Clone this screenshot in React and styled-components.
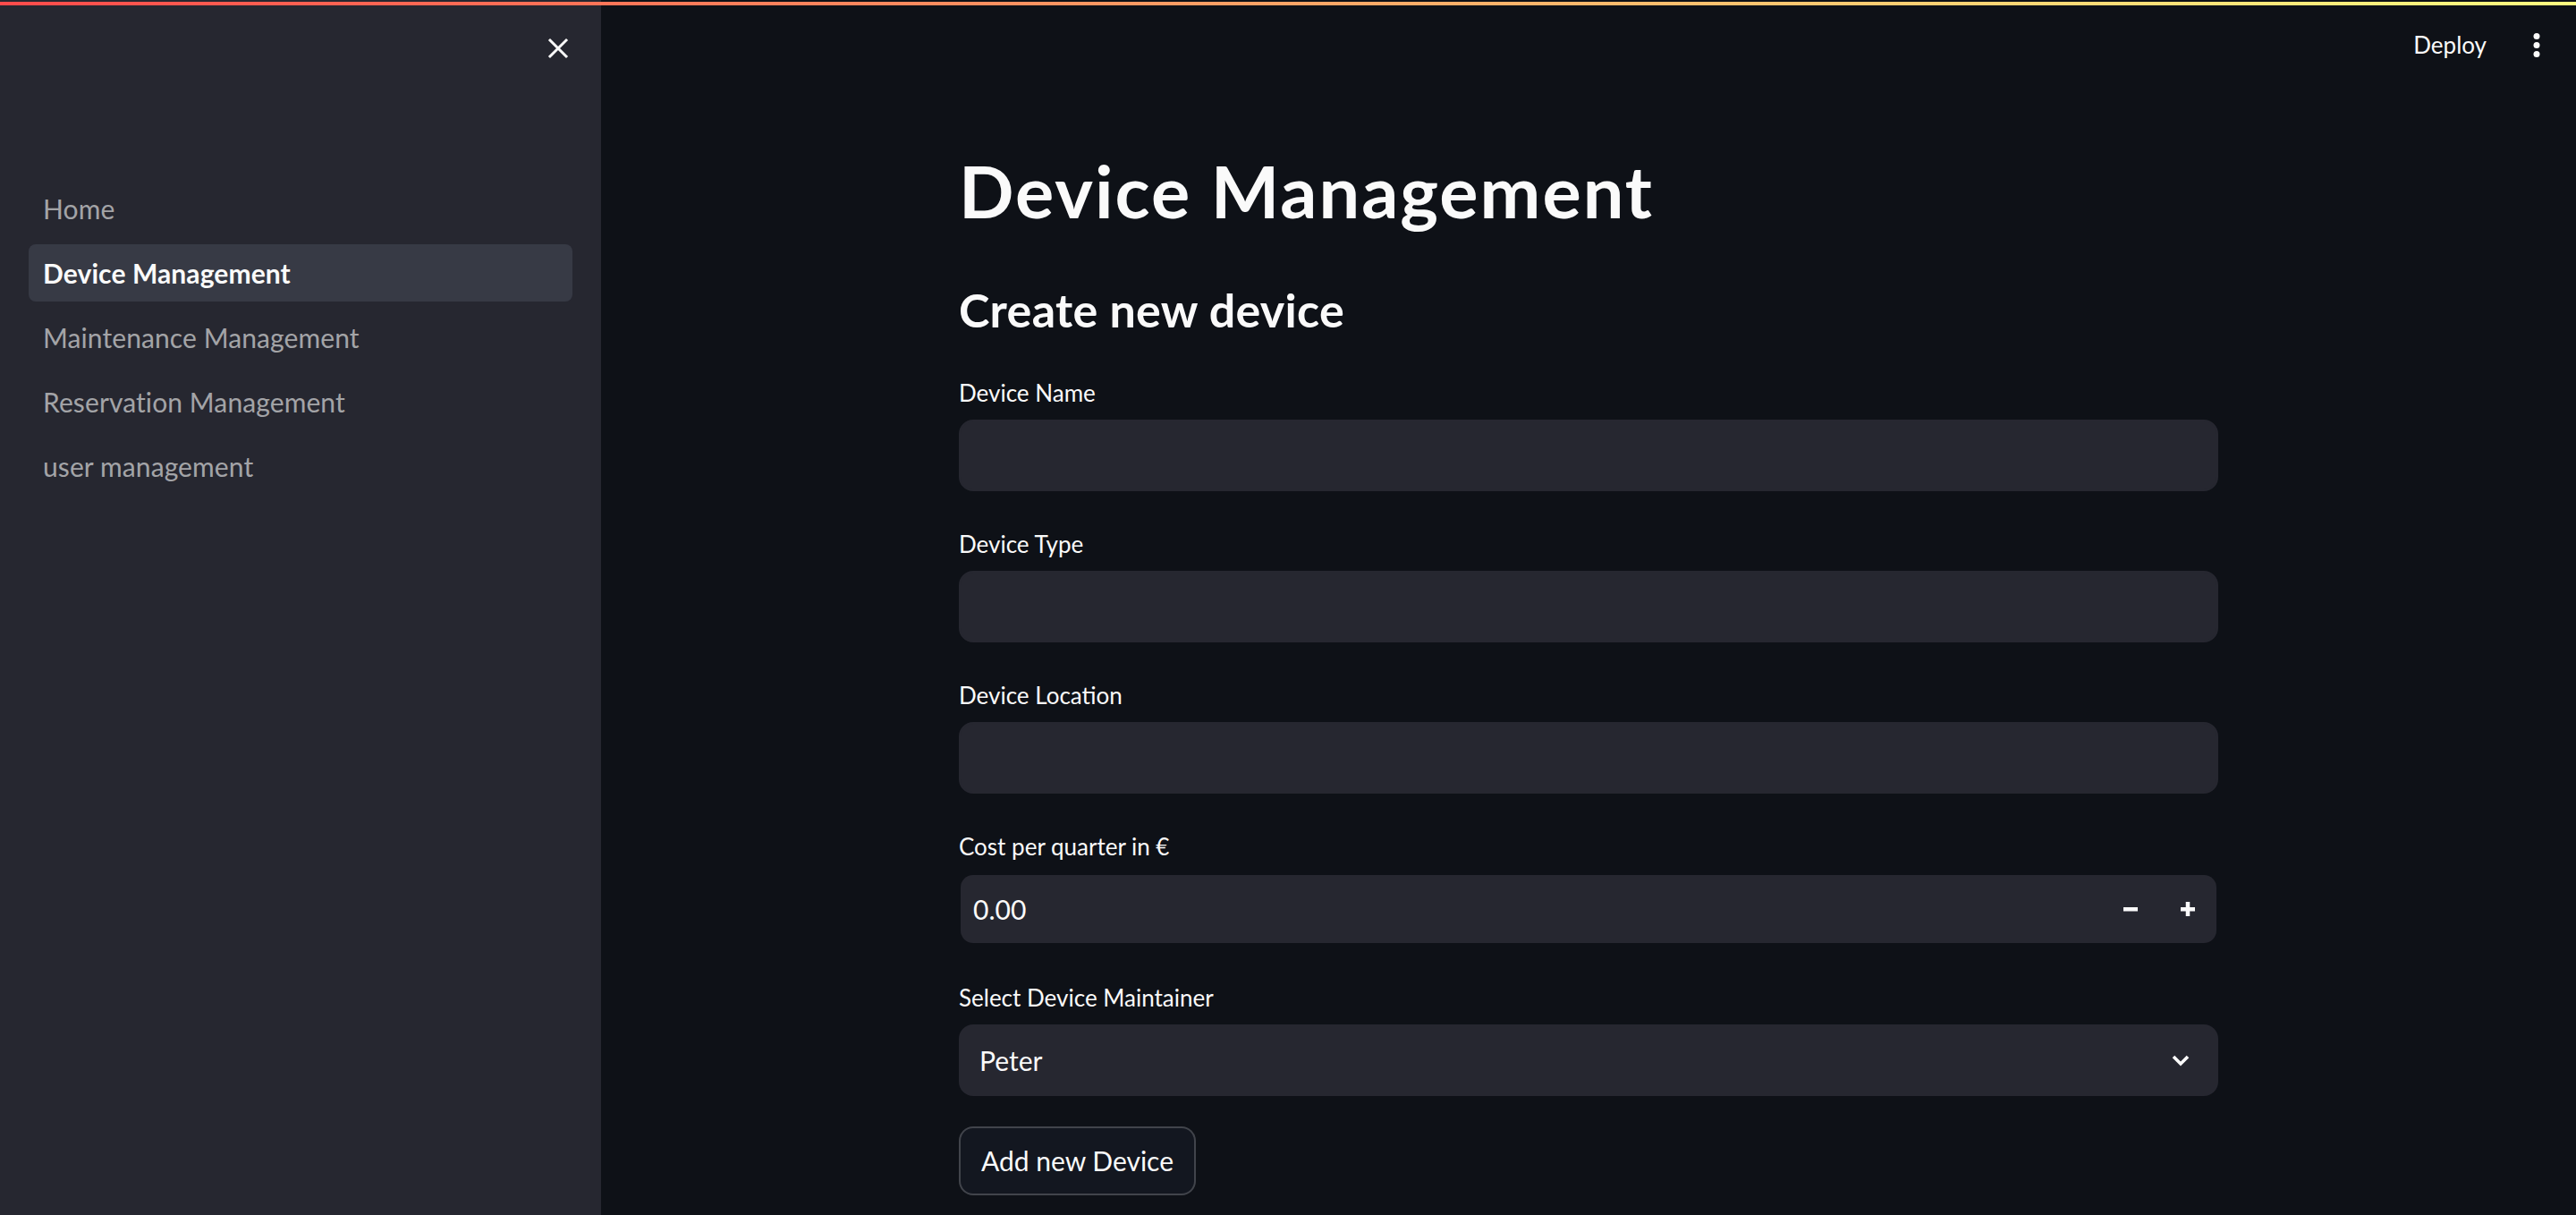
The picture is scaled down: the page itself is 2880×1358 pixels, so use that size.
import React from "react";
import styled, { createGlobalStyle } from "styled-components";

const GlobalStyle = createGlobalStyle`
  html, body {
    margin: 0;
    padding: 0;
    background: #0e1117;
  }
  body {
    font-family: Lato, "Noto Sans", "Liberation Sans", sans-serif;
    color: #fafafa;
    -webkit-font-smoothing: antialiased;
  }
  #root { height: 100vh; }
  *, *::before, *::after { box-sizing: border-box; }
`;

const Shell = styled.div`
  position: relative;
  display: flex;
  height: 100vh;
  overflow: hidden;
  background: #0e1117;
`;

const Decoration = styled.div`
  position: absolute;
  top: 2px;
  left: 0;
  right: 0;
  height: 4px;
  background: linear-gradient(90deg, rgb(255, 75, 75), rgb(255, 253, 128));
  z-index: 5;
`;

const Sidebar = styled.aside`
  width: 672px;
  flex-shrink: 0;
  background: #262730;
  display: flex;
  flex-direction: column;
`;

const SidebarHeader = styled.div`
  height: 201px;
  display: flex;
  justify-content: flex-end;
  align-items: flex-start;
  padding: 42px 36px 0 0;
`;

const IconButton = styled.button`
  background: none;
  border: none;
  padding: 0;
  margin: 0;
  color: #fafafa;
  display: flex;
  align-items: center;
  justify-content: center;
  cursor: pointer;
`;

const NavList = styled.nav`
  display: flex;
  flex-direction: column;
  gap: 8px;
  padding: 0 32px;
`;

const NavLink = styled.a`
  height: 64px;
  display: flex;
  align-items: center;
  padding: 0 16px;
  border-radius: 8px;
  font-size: 30px;
  line-height: 1.2;
  letter-spacing: 0.1px;
  text-decoration: none;
  font-weight: ${(p) => (p.$active ? 700 : 400)};
  color: ${(p) => (p.$active ? "#fafafa" : "rgba(250, 250, 250, 0.6)")};
  background: ${(p) => (p.$active ? "rgba(151, 166, 195, 0.15)" : "transparent")};
`;

const Main = styled.main`
  flex: 1;
  min-width: 0;
  display: flex;
  flex-direction: column;
`;

const Header = styled.header`
  height: 102px;
  display: flex;
  justify-content: flex-end;
  align-items: center;
  padding-right: 40px;
`;

const DeployButton = styled.button`
  background: none;
  border: none;
  padding: 0;
  margin: 0 52px 0 0;
  color: #fafafa;
  font-family: inherit;
  font-size: 26px;
  line-height: 1.2;
`;

const Content = styled.section`
  width: 1408px;
  margin: 0 auto;
  padding-top: 62px;
  display: flex;
  flex-direction: column;
  gap: 32px;
`;

const Title = styled.h1`
  margin: 0;
  font-size: 81px;
  font-weight: 700;
  line-height: 1.2;
  letter-spacing: 2px;
  color: #fafafa;
`;

const Subtitle = styled.h3`
  margin: 22px 0 2px;
  font-size: 52px;
  font-weight: 700;
  line-height: 1.2;
  letter-spacing: 0.3px;
  color: #fafafa;
`;

const Field = styled.div`
  display: flex;
  flex-direction: column;
`;

const Label = styled.label`
  font-size: 26px;
  line-height: 31px;
  padding: 12px 0 14px;
  color: #fafafa;
`;

const TextBox = styled.div`
  height: 80px;
  background: #262730;
  border: 2px solid #262730;
  border-radius: 16px;
`;

const NumberBox = styled.div`
  height: 80px;
  display: flex;
  align-items: center;
  background: #262730;
  background-clip: padding-box;
  border: 2px solid transparent;
  border-radius: 16px;
`;

const NumberValue = styled.div`
  flex: 1;
  padding-left: 14px;
  font-size: 30px;
  line-height: 1.2;
`;

const StepButton = styled.button`
  width: 64px;
  height: 100%;
  background: none;
  border: none;
  padding: 0;
  color: #fafafa;
  display: flex;
  align-items: center;
  justify-content: center;
`;

const SelectBox = styled.div`
  height: 80px;
  display: flex;
  align-items: center;
  justify-content: space-between;
  background: #262730;
  border-radius: 16px;
  padding: 0 32px 0 23px;
  font-size: 30px;
  line-height: 1.2;
`;

const PrimaryButton = styled.button`
  align-self: flex-start;
  margin-top: 2px;
  height: 77px;
  padding: 0 23px;
  border: 2px solid rgba(250, 250, 250, 0.2);
  background: #131720;
  border-radius: 16px;
  color: #fafafa;
  font-family: inherit;
  font-size: 30px;
  line-height: 1.2;
  cursor: pointer;
`;

const CloseIcon = () => (
  <svg width="24" height="24" viewBox="0 0 24 24">
    <path d="M3 3 L21 21 M21 3 L3 21" stroke="#fafafa" strokeWidth="3" strokeLinecap="square" />
  </svg>
);

const KebabIcon = () => (
  <svg width="8" height="28" viewBox="0 0 8 28">
    <circle cx="4" cy="3.5" r="3.5" fill="#fafafa" />
    <circle cx="4" cy="13.5" r="3.5" fill="#fafafa" />
    <circle cx="4" cy="23.5" r="3.5" fill="#fafafa" />
  </svg>
);

const MinusIcon = () => (
  <svg width="16" height="16" viewBox="0 0 16 16">
    <rect x="0" y="6" width="16" height="4.5" fill="#fafafa" />
  </svg>
);

const PlusIcon = () => (
  <svg width="16" height="16" viewBox="0 0 16 16">
    <rect x="0" y="6" width="16" height="4.5" fill="#fafafa" />
    <rect x="5.75" y="0" width="4.5" height="16" fill="#fafafa" />
  </svg>
);

const ChevronIcon = () => (
  <svg width="20" height="14" viewBox="0 0 20 14">
    <polyline points="2,3 10,11 18,3" fill="none" stroke="#fafafa" strokeWidth="3.6" />
  </svg>
);

const navItems = [
  "Home",
  "Device Management",
  "Maintenance Management",
  "Reservation Management",
  "user management",
];

const textFields = ["Device Name", "Device Type", "Device Location"];

export default function App() {
  return (
    <>
      <GlobalStyle />
      <Shell>
        <Decoration />
        <Sidebar>
          <SidebarHeader>
            <IconButton aria-label="Close sidebar">
              <CloseIcon />
            </IconButton>
          </SidebarHeader>
          <NavList>
            {navItems.map((item) => (
              <NavLink key={item} $active={item === "Device Management"}>
                {item}
              </NavLink>
            ))}
          </NavList>
        </Sidebar>
        <Main>
          <Header>
            <DeployButton>Deploy</DeployButton>
            <IconButton aria-label="Main menu">
              <KebabIcon />
            </IconButton>
          </Header>
          <Content>
            <Title>Device Management</Title>
            <Subtitle>Create new device</Subtitle>
            {textFields.map((f) => (
              <Field key={f}>
                <Label>{f}</Label>
                <TextBox />
              </Field>
            ))}
            <Field>
              <Label>Cost per quarter in €</Label>
              <NumberBox>
                <NumberValue>0.00</NumberValue>
                <StepButton aria-label="Decrement">
                  <MinusIcon />
                </StepButton>
                <StepButton aria-label="Increment">
                  <PlusIcon />
                </StepButton>
              </NumberBox>
            </Field>
            <Field>
              <Label>Select Device Maintainer</Label>
              <SelectBox>
                <span>Peter</span>
                <ChevronIcon />
              </SelectBox>
            </Field>
            <PrimaryButton>Add new Device</PrimaryButton>
          </Content>
        </Main>
      </Shell>
    </>
  );
}
